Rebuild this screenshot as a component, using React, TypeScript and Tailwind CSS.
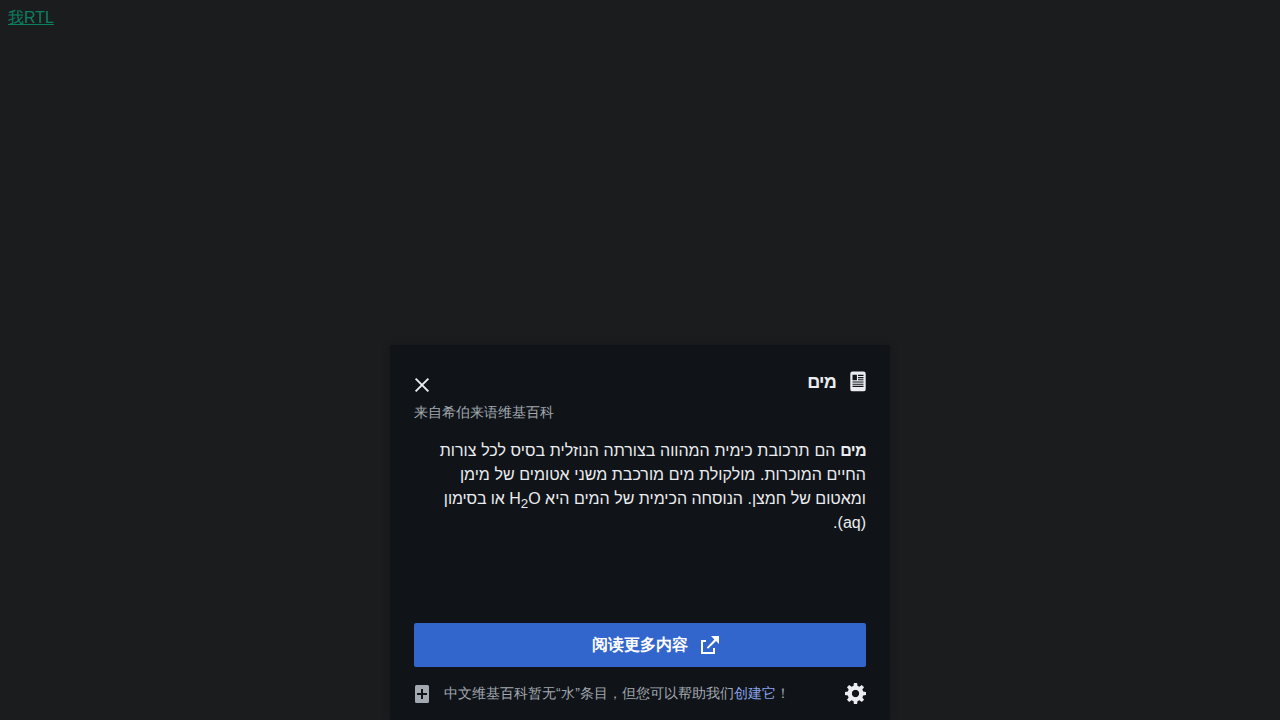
function ArticleIcon() {
  return (
    <svg viewBox="0 -0.4 20 20" className="h-[22px] w-[22px] -scale-x-100 fill-[#eaecf0]">
      <path
        fillRule="evenodd"
        d="M5 1a2 2 0 0 0-2 2v14a2 2 0 0 0 2 2h10a2 2 0 0 0 2-2V3a2 2 0 0 0-2-2zm0 3h5v1H5zm0 2h5v1H5zm0 2h5v1H5zm10 7H5v-1h10zm0-2H5v-1h10zm0-2H5v-1h10zm0-2h-4V4h4z"
      />
    </svg>
  );
}

function CloseIcon() {
  return (
    <svg viewBox="0 0 20 20" className="h-5 w-5 fill-[#eaecf0]">
      <path d="m4.34 2.93 12.73 12.73-1.41 1.41L2.93 4.35z" />
      <path d="M17.07 4.34 4.34 17.07l-1.41-1.41L15.66 2.93z" />
    </svg>
  );
}

function ExternalIcon() {
  return (
    <svg viewBox="0 0 18 18" className="h-[18px] w-[18px] fill-white">
      <path d="M0 4h5v2H2v10h10v-4h2v6H0z" />
      <path d="M10 0h8v8l-2.9-2.9-8 7.6-1.3-1.3 7.6-8z" />
    </svg>
  );
}

function AddPageIcon() {
  return (
    <svg viewBox="0 0 14 18" className="h-[18px] w-[14px] fill-[#a2a9b1]">
      <path
        fillRule="evenodd"
        d="M1.5 0h11A1.5 1.5 0 0 1 14 1.5v15a1.5 1.5 0 0 1-1.5 1.5h-11A1.5 1.5 0 0 1 0 16.5v-15A1.5 1.5 0 0 1 1.5 0zM6 4v4H2v2h4v4h2v-4h4V8H8V4z"
      />
    </svg>
  );
}

function GearIcon() {
  const teeth = 'M1.5-10h-3l-1 6.5h5m0 7h-5l1 6.5h3';
  return (
    <svg viewBox="0 0 20 20" className="h-[21px] w-[21px] fill-[#eaecf0]">
      <g transform="translate(10 10)">
        <path d={teeth} />
        <path d={teeth} transform="rotate(45)" />
        <path d={teeth} transform="rotate(90)" />
        <path d={teeth} transform="rotate(135)" />
      </g>
      <path d="M10 2.5a7.5 7.5 0 0 0 0 15 7.5 7.5 0 0 0 0-15v4a3.5 3.5 0 0 1 0 7 3.5 3.5 0 0 1 0-7" />
    </svg>
  );
}

export default function App() {
  return (
    <div className="flex h-screen flex-col justify-between overflow-hidden bg-[#1b1c1d] font-['Liberation_Sans',sans-serif]">
      <div className="px-2 pt-2 text-base leading-5">
        <a href="#" className="text-[#0a8062] underline">我RTL</a>
      </div>
      <section className="mx-auto flex h-[375px] w-[500px] flex-col rounded-t-[2px] bg-[#101418] px-6 shadow-[0_0_8px_rgba(0,0,0,0.2)]">
        <header dir="rtl" className="-mr-[3px] mt-[25px] flex h-[30px] items-start">
          <ArticleIcon />
          <h1 className="mr-[11px] flex-1 text-lg leading-6 font-bold tracking-[-0.8px] text-[#eaecf0]">מים</h1>
          <button aria-label="关闭" className="-ml-[2px] mt-[5px]">
            <CloseIcon />
          </button>
        </header>
        <p className="mt-[2px] text-sm leading-5 text-[#a2a9b1]">来自希伯来语维基百科</p>
        <p dir="rtl" lang="he" className="mt-[17px] h-[184px] text-base leading-6 text-[#eaecf0]">
          <span className="[word-spacing:0.3px]"><b className="tracking-[-0.6px]">מים</b> הם תרכובת כימית המהווה בצורתה הנוזלית בסיס לכל צורות </span>
          <span className="[word-spacing:0.2px]">החיים המוכרות. מולקולת מים מורכבת משני אטומים של מימן </span>
          <span>ומאטום של חמצן. הנוסחה הכימית של המים היא <span dir="ltr">H<sub className="static align-sub text-[13.333px]">2</sub>O</span> <span className="tracking-[-0.1px]">או בסימון</span> </span>
          <span dir="ltr">(aq)</span>.
        </p>
        <a href="#" dir="rtl" className="flex h-11 shrink-0 items-center rounded-[2px] bg-[#3366cc] pr-[147px] text-base font-bold text-white">
          <ExternalIcon />
          <span className="mr-[13px]">阅读更多内容</span>
        </a>
        <footer className="mt-4 flex h-[21px] items-center">
          <span className="ml-px">
            <AddPageIcon />
          </span>
          <p className="mb-[2px] ml-[15px] flex-1 text-sm leading-5 text-[#a2a9b1]">
            中文维基百科暂无<span className="tracking-[0.3px]">“水”</span>条目，但您可以帮助我们<a href="#" className="text-[#88a3e8]">创建它</a>！
          </p>
          <button aria-label="设置">
            <GearIcon />
          </button>
        </footer>
      </section>
    </div>
  );
}
